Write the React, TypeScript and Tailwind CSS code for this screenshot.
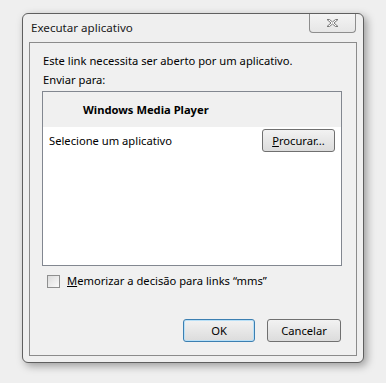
export default function App() {
  return (
    <div className="w-[386px] h-[383px] bg-[#efefef] pl-[22px] pt-[13px] font-['Noto_Sans',sans-serif] text-[11.2px] leading-[16px] text-black">
      <div className="relative w-[342px] h-[350px] rounded-[6px] border border-[#5f5f5f] bg-[#efefef] shadow-[3px_3px_8px_rgba(0,0,0,0.35)] flex flex-col">
        {/* title bar */}
        <div className="flex h-[28px] items-start justify-between">
          <span className="pl-[8px] pt-[6px] text-[11.6px] text-[#1a1a1a]">Executar aplicativo</span>
          <button className="mr-[7px] flex h-[19px] w-[47px] items-center justify-center rounded-b-[4px] border border-t-0 border-[#8d8d8d] bg-gradient-to-b from-[#f4f4f4] to-[#e6e6e6]">
            <svg width="13" height="10" viewBox="0 0 13 10">
              <path
                d="M1 1.5 L3.5 1.5 L6.5 4 L9.5 1.5 L12 1.5 L8 5 L12 8.5 L9.5 8.5 L6.5 6 L3.5 8.5 L1 8.5 L5 5 Z"
                fill="#fdfdfd"
                stroke="#7a7a7a"
                strokeWidth="1"
                strokeLinejoin="round"
              />
            </svg>
          </button>
        </div>

        {/* content panel */}
        <div className="mx-[6px] mb-[6px] flex flex-1 flex-col border border-[#8b8b8b] bg-[#f0f0f0] px-[12px] pt-[10px]">
          <p className="pl-[1px]">Este link necessita ser aberto por um aplicativo.</p>
          <p className="mt-[3px] pl-[1px]">Enviar para:</p>

          <div className="mt-[3px] mr-[2px] h-[175px] border border-[#828790] bg-white">
            <div className="flex h-[35px] items-center bg-[#f0f0f0] pl-[40px] font-bold">Windows Media Player</div>
            <div className="flex items-center justify-between pl-[6px] pr-[6px] pt-[2px]">
              <span>Selecione um aplicativo</span>
              <button className="h-[23px] w-[73px] rounded-[3px] border border-[#707070] bg-gradient-to-b from-[#f2f2f2] to-[#dcdcdc]">
                <span className="underline">P</span>rocurar...
              </button>
            </div>
          </div>

          <label className="mt-[7px] flex items-center pl-[5px]">
            <span className="h-[13px] w-[13px] border border-[#8e8f8f] bg-gradient-to-br from-[#dcdcdc] to-[#fafafa]" />
            <span className="ml-[7px]">
              <span className="underline">M</span>emorizar a decisão para links “mms”
            </span>
          </label>

          <div className="mt-auto mb-[13px] flex justify-end gap-[12px] pr-[3px]">
            <button className="h-[23px] w-[72px] rounded-[3px] border border-[#3c7fb1] bg-gradient-to-b from-[#f2f2f2] to-[#dcdcdc] shadow-[inset_0_0_0_1px_#b9e0f7]">
              OK
            </button>
            <button className="h-[23px] w-[74px] rounded-[3px] border border-[#707070] bg-gradient-to-b from-[#f2f2f2] to-[#dcdcdc]">
              Cancelar
            </button>
          </div>
        </div>
      </div>
    </div>
  )
}
